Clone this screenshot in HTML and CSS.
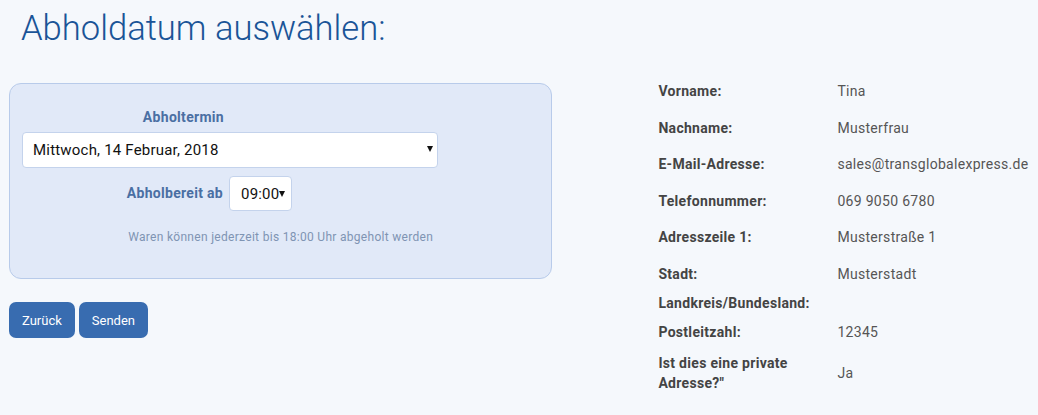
FILE: index.html
```html
<!DOCTYPE html>
<html lang="de">
<head>
  <meta charset="UTF-8" />
  <title>Abholdatum auswählen</title>
  <link rel="stylesheet" href="styles.css">
</head>
<body>
  <h1 class="page-title">Abholdatum auswählen:</h1>

  <div class="layout">
    <div class="left-col">
      <form class="pickup-panel" id="pickup-form">
        <label class="field-label date-label" for="pickup-date">Abholtermin</label>
        <div class="select-wrap date-wrap">
          <select id="pickup-date" class="select-box">
            <option>Mittwoch, 14 Februar, 2018</option>
            <option>Donnerstag, 15 Februar, 2018</option>
            <option>Freitag, 16 Februar, 2018</option>
          </select>
          <span class="select-arrow"></span>
        </div>

        <div class="time-row">
          <label class="field-label time-label" for="pickup-time">Abholbereit ab</label>
          <div class="select-wrap time-wrap">
            <select id="pickup-time" class="select-box">
              <option>09:00</option>
              <option>10:00</option>
              <option>11:00</option>
            </select>
            <span class="select-arrow"></span>
          </div>
        </div>

        <p class="note">Waren können jederzeit bis 18:00 Uhr abgeholt werden</p>
      </form>

      <div class="button-row">
        <button type="button" class="btn">Zurück</button>
        <button type="submit" form="pickup-form" class="btn">Senden</button>
      </div>
    </div>

    <div class="details">
      <div class="row tall"><span class="key">Vorname:</span><span class="val">Tina</span></div>
      <div class="row tall"><span class="key">Nachname:</span><span class="val">Musterfrau</span></div>
      <div class="row tall"><span class="key">E-Mail-Adresse:</span><span class="val">sales@transglobalexpress.de</span></div>
      <div class="row tall"><span class="key">Telefonnummer:</span><span class="val">069 9050 6780</span></div>
      <div class="row tall"><span class="key">Adresszeile 1:</span><span class="val">Musterstraße 1</span></div>
      <div class="row tall"><span class="key">Stadt:</span><span class="val">Musterstadt</span></div>
      <div class="row"><span class="key">Landkreis/Bundesland:</span><span class="val"></span></div>
      <div class="row"><span class="key">Postleitzahl:</span><span class="val">12345</span></div>
      <div class="row last"><span class="key">Ist dies eine private Adresse?"</span><span class="val">Ja</span></div>
    </div>
  </div>
</body>
</html>
```

FILE: styles.css
```css
body {
  margin: 0;
  font-family: Roboto, "Liberation Sans", sans-serif;
  background: #f5f8fc;
  color: #444;
  letter-spacing: 0.3px;
}

.page-title {
  margin: 0;
  padding: 7px 0 0 21px;
  font-size: 34.6px;
  line-height: 42px;
  font-weight: 300;
  letter-spacing: 0;
  color: #1a5497;
}

.layout {
  display: flex;
  align-items: flex-start;
}

.left-col {
  width: 544px;
  margin: 34px 0 0 9px;
}

/* Pickup panel */
.pickup-panel {
  display: flex;
  flex-direction: column;
  background: #e1e9f8;
  border: 1px solid #b8cbea;
  border-radius: 12px;
  padding: 23px 12px 32px;
}

.field-label {
  font-size: 14px;
  line-height: 20px;
  font-weight: 700;
  color: #4a6fa3;
}

.date-label {
  width: 202px;
  text-align: right;
  margin-bottom: 5px;
}

.select-wrap {
  position: relative;
}

.date-wrap {
  width: 416px;
}

.select-box {
  appearance: none;
  -webkit-appearance: none;
  width: 100%;
  height: 36px;
  padding: 0 10px;
  font-family: inherit;
  font-size: 15px;
  letter-spacing: 0.2px;
  color: #111;
  background: #fff;
  border: 1px solid #c4d3ec;
  border-radius: 4px;
  box-sizing: border-box;
}

/* small black triangle drawn over the select */
.select-arrow {
  position: absolute;
  right: 5px;
  top: 14px;
  width: 0;
  height: 0;
  border-left: 3.5px solid transparent;
  border-right: 3.5px solid transparent;
  border-top: 6px solid #111;
  pointer-events: none;
}

.time-row {
  display: flex;
  align-items: flex-start;
  gap: 6px;
  margin-top: 8px;
}

.time-label {
  width: 201px;
  text-align: right;
  padding-top: 7px;
}

.time-wrap {
  width: 63px;
}

.time-wrap .select-box {
  height: 35px;
  padding: 0 11px;
}

.time-wrap .select-arrow {
  right: 7px;
  top: 15px;
}

.note {
  margin: 18px 0 0;
  font-size: 12px;
  line-height: 17px;
  text-align: center;
  color: #7f94b3;
}

.button-row {
  display: flex;
  gap: 4px;
  margin-top: 23px;
}

.btn {
  height: 36px;
  padding: 0 13px;
  font-family: inherit;
  font-size: 13px;
  letter-spacing: 0;
  color: #fff;
  background: #386cb0;
  border: none;
  border-radius: 7px;
  cursor: pointer;
}

.btn:hover {
  background: #2d5c99;
}

/* Customer details */
.details {
  margin: 20px 0 0 106px;
  width: 380px;
  font-size: 14px;
}

.row {
  display: grid;
  grid-template-columns: 179px 1fr;
  align-items: center;
  padding: 4.5px 0;
  line-height: 20px;
}

.row.tall {
  padding-top: 12.1px;
}

.row.last {
  padding-top: 6.5px;
}

.key {
  font-weight: 700;
  color: #444;
  padding-right: 20px;
}

.val {
  color: #555;
}
```
